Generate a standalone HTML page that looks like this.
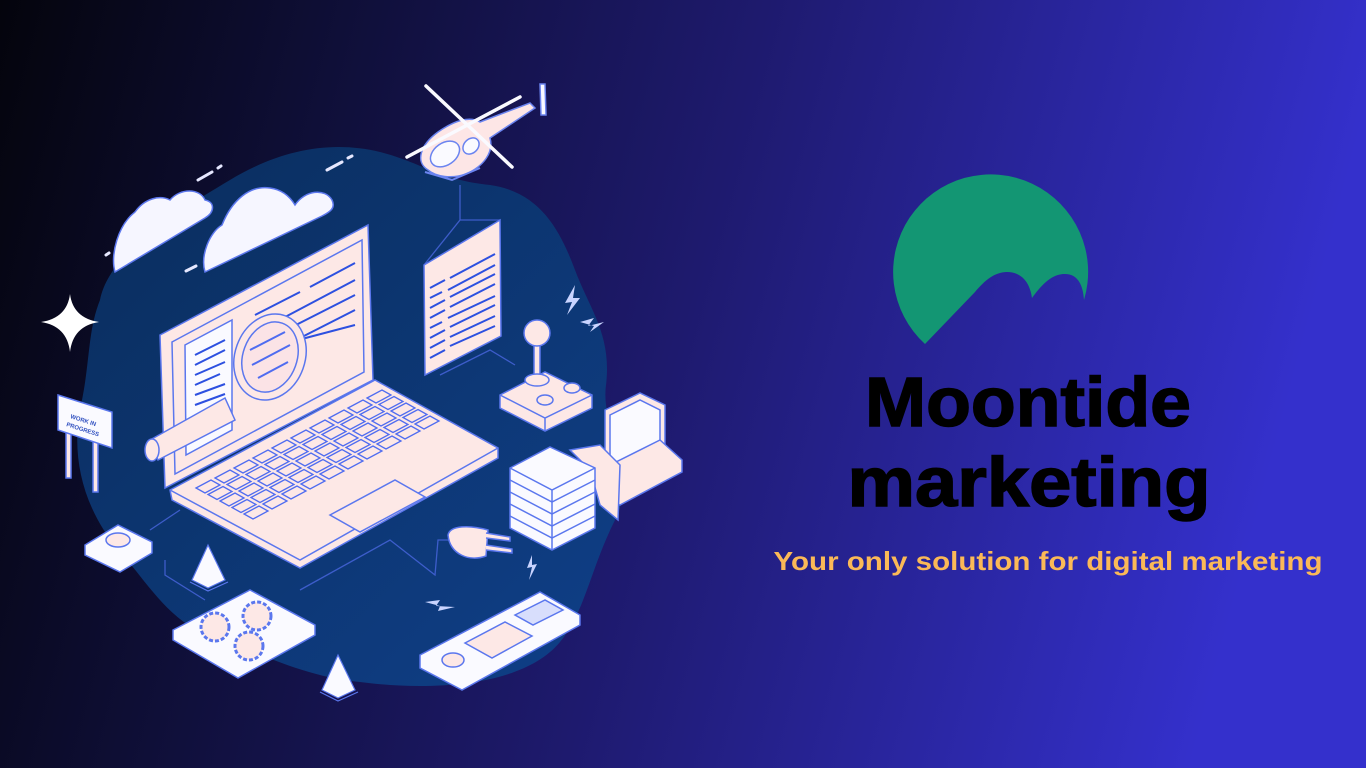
<!DOCTYPE html>
<html><head><meta charset="utf-8"><style>
html,body{margin:0;padding:0;width:1366px;height:768px;overflow:hidden}
svg{display:block}
</style></head><body>
<svg width="1366" height="768" viewBox="0 0 1366 768" xmlns="http://www.w3.org/2000/svg" xmlns:xlink="http://www.w3.org/1999/xlink">
<defs>
<linearGradient id="bg" x1="0" y1="0" x2="1" y2="0.15">
<stop offset="0" stop-color="#04040c"/><stop offset="0.25" stop-color="#0f0f38"/><stop offset="0.55" stop-color="#1e1a6e"/><stop offset="1" stop-color="#3430cc"/>
</linearGradient>
<linearGradient id="blob" x1="0" y1="0" x2="1" y2="1">
<stop offset="0" stop-color="#0a2d5c"/><stop offset="1" stop-color="#0f3f88"/>
</linearGradient>
<path id="key" d="M0,0 l15,-8 l9,5 l-15,8z" fill="#fde8e6" stroke="#4f6cf0" stroke-width="1.3"/>
<g id="row">
<use xlink:href="#key" x="0" y="0"/><use xlink:href="#key" x="19" y="-10"/><use xlink:href="#key" x="38" y="-20"/><use xlink:href="#key" x="57" y="-30"/><use xlink:href="#key" x="76" y="-40"/><use xlink:href="#key" x="95" y="-50"/><use xlink:href="#key" x="114" y="-60"/><use xlink:href="#key" x="133" y="-70"/><use xlink:href="#key" x="152" y="-80"/><use xlink:href="#key" x="171" y="-90"/>
</g>
</defs>
<rect width="1366" height="768" fill="url(#bg)"/>
<path d="M100,300 C110,250 180,210 230,180 C280,150 330,140 380,152 C420,162 440,180 490,185 C540,192 560,230 575,270 C590,310 612,335 606,385 C600,430 640,470 615,520 C590,570 585,612 560,642 C520,690 420,690 360,682 C300,676 260,652 220,640 C170,625 150,585 120,552 C80,505 70,450 82,400 C90,360 88,330 100,300Z" fill="url(#blob)"/>
<g stroke="#4a66e0" stroke-width="1.3" fill="none" opacity="0.8">
<path d="M150,530 L180,510"/><path d="M165,560 L165,575 L205,600 M300,590 L390,540 L435,575 L438,540 L450,540"/>
<path d="M440,375 L490,350 L515,365"/><path d="M460,185 L460,220 L424,265 M460,220 L500,220"/>
</g>
<path d="M70,294 Q73,318 99,322 Q73,326 70,352 Q67,326 41,322 Q67,318 70,294Z" fill="#fff"/>
<g stroke="#e6e8ff" stroke-width="3" stroke-linecap="round">
<path d="M198,180 L212,172 M218,168 L221,166 M327,170 L342,162 M348,158 L352,156 M186,271 L196,266 M143,250 L150,246 M106,255 L109,253"/>
</g>
<g fill="#f6f6ff" stroke="#5d78ee" stroke-width="1.5">
<path d="M115,272 C110,255 118,225 135,212 C145,198 160,195 170,200 C180,188 200,188 205,200 C215,202 215,212 205,218 L115,272Z"/>
<path d="M205,272 C200,255 210,232 222,225 C232,200 250,185 270,188 C285,190 292,200 295,205 C305,190 325,188 332,200 C336,208 330,212 322,216 L205,272Z"/>
</g>
<g stroke="#6b84f0" stroke-width="1.5">
<path d="M428,170 C415,162 420,145 438,132 C455,120 470,116 480,122 L530,103 L535,108 L490,138 C494,152 484,166 466,174 C452,179 436,177 428,170Z" fill="#fde6e6"/>
<ellipse cx="445" cy="154" rx="16" ry="11" fill="#fafaff" transform="rotate(-35 445 154)"/>
<ellipse cx="471" cy="146" rx="9" ry="7" fill="#fafaff" transform="rotate(-45 471 146)"/>
<path d="M540,84 L545,84 L546,115 L541,115Z" fill="#fafaff"/>
</g>
<g stroke="#fafaff" stroke-width="3.5" stroke-linecap="round">
<path d="M426,86 L512,167 M407,157 L520,97"/>
</g>
<path d="M425,172 L452,180 L480,168" stroke="#6b84f0" stroke-width="2" fill="none"/>
<path d="M424,265 L500,220 L501,336 L425,375Z" fill="#fde8e6" stroke="#5b77ee" stroke-width="1.5"/>
<g stroke="#2d50e0" stroke-width="2">
<path d="M430,288 L445,280 M450,278 L495,254 M430,298 L442,292 M448,290 L495,265 M430,308 L445,300 M450,297 L495,274 M430,318 L445,310 M450,307 L495,284 M430,328 L442,322 M448,318 L495,296 M430,338 L445,330 M450,327 L495,305 M430,348 L445,340 M450,337 L495,316 M430,358 L445,350 M450,346 L495,326"/>
</g>
<g stroke="#5b77ee" stroke-width="1.5">
<path d="M500,395 L545,372 L592,395 L592,408 L545,431 L500,408Z" fill="#fde8e6"/>
<path d="M500,395 L545,418 L592,395 M545,418 L545,431" fill="none"/>
<rect x="534" y="345" width="6" height="35" fill="#fde8e6"/>
<circle cx="537" cy="333" r="13" fill="#fde8e6"/>
<ellipse cx="537" cy="380" rx="12" ry="6" fill="#fde8e6"/>
<ellipse cx="572" cy="388" rx="8" ry="5" fill="#fde8e6"/>
<ellipse cx="545" cy="400" rx="8" ry="5" fill="#fde8e6"/>
</g>
<g fill="#c9d4ff"><path d="M575,285 L565,303 L572,302 L567,315 L580,298 L573,298Z"/><path d="M580,322 L594,318 L588,326 L604,322 L590,332 L594,326Z"/>
<path d="M532,555 L527,568 L532,567 L529,580 L537,564 L532,565Z"/><path d="M425,602 L440,600 L436,606 L455,607 L438,611 L440,606Z"/></g>
<g stroke="#5b77ee" stroke-width="1.5" fill="#fde8e6">
<path d="M605,410 L640,393 L665,405 L665,460 L630,478 L605,465Z"/>
<path d="M610,415 L640,400 L660,410 L660,455 L632,470 L610,460Z" fill="#fafaff"/>
<path d="M600,470 L660,440 L682,460 L682,472 L620,505 L598,495Z"/>
<path d="M570,450 L600,445 L620,465 L618,520 L600,505 L590,470Z"/>
</g>
<g stroke="#5b77ee" stroke-width="1.5">
<path d="M510,468 L550,447 L595,468 L595,528 L552,550 L510,528Z" fill="#fafaff"/>
<path d="M510,468 L552,490 L595,468 M552,490 L552,550" fill="none"/>
<path d="M510,480 L552,502 L595,480 M510,492 L552,514 L595,492 M510,504 L552,526 L595,504 M510,516 L552,538 L595,516" fill="none"/>
</g>
<g stroke="#5b77ee" stroke-width="1.5" fill="#fde8e6">
<path d="M448,535 C450,525 470,525 488,530 L486,556 C470,562 450,555 448,535Z"/>
<path d="M486,533 L510,537 L510,541 L486,538 M486,545 L512,549 L512,553 L486,550"/>
</g>
<g stroke="#5b77ee" stroke-width="1.5">
<path d="M170,490 L375,380 L498,448 L498,458 L300,568 L172,500Z" fill="#fde8e6"/>
<path d="M170,490 L300,560 L498,448" fill="none"/>
<path d="M330,515 L395,480 L425,497 L360,532Z" fill="#fde8e6"/>
</g>
<use xlink:href="#row" x="196" y="488"/>
<use xlink:href="#row" x="208" y="494.5"/>
<use xlink:href="#row" x="220" y="501"/>
<use xlink:href="#row" x="232" y="507.5"/>
<use xlink:href="#row" x="244" y="514"/>
<g stroke="#5b77ee" stroke-width="1.5">
<path d="M160,335 L368,225 L373,380 L165,488Z" fill="#fde8e6"/>
<path d="M172,342 L362,240 L364,372 L175,474Z" fill="#fde8e6"/>
<path d="M185,345 L232,320 L232,430 L186,455Z" fill="#fafaff"/>
</g>
<g stroke="#2d50e0" stroke-width="2">
<path d="M255,315 L300,292 M310,287 L355,263 M270,325 L355,280 M290,328 L355,295 M300,338 L355,310 M260,350 L355,325 M195,355 L225,340 M195,365 L225,350 M195,375 L225,362 M195,385 L220,374 M195,395 L225,384 M195,405 L225,394"/>
</g>
<g stroke="#5b77ee" stroke-width="1.5">
<path d="M150,440 L225,398 L235,420 L158,460Z" fill="#fde8e6"/>
<ellipse cx="152" cy="450" rx="7" ry="11" fill="#fde8e6"/>
<ellipse cx="270" cy="357" rx="35" ry="44" fill="#fde8e6" transform="rotate(20 270 357)"/>
<ellipse cx="270" cy="357" rx="27" ry="36" fill="#fbe3e6" transform="rotate(20 270 357)"/>
</g>
<g stroke="#4f6cf0" stroke-width="2"><path d="M250,350 L285,332 M252,365 L290,345 M258,378 L288,362"/></g>
<g stroke="#5b77ee" stroke-width="1.5" fill="#fde8e6">
<rect x="66" y="420" width="5" height="58"/><rect x="93" y="430" width="5" height="62"/>
<path d="M58,395 L112,412 L112,448 L58,430Z" fill="#fafaff"/>
</g>
<text x="70" y="418" font-family="Liberation Sans, sans-serif" font-size="6" font-weight="bold" fill="#3050c0" transform="rotate(18 70 418)">WORK IN</text>
<text x="66" y="426" font-family="Liberation Sans, sans-serif" font-size="6" font-weight="bold" fill="#3050c0" transform="rotate(18 66 426)">PROGRESS</text>
<g stroke="#5b77ee" stroke-width="1.5" fill="#fafaff">
<path d="M85,545 L118,525 L152,542 L152,553 L120,572 L85,555Z"/>
<ellipse cx="118" cy="540" rx="12" ry="7" fill="#fde8e6"/>
</g>
<g stroke="#5b77ee" stroke-width="1.2" fill="#fafaff">
<path d="M192,580 L208,545 L225,580 L208,588Z"/><path d="M190,582 L208,591 L228,582" fill="none"/>
<path d="M322,690 L338,655 L355,690 L338,698Z"/><path d="M320,692 L338,701 L358,692" fill="none"/>
</g>
<g stroke="#5b77ee" stroke-width="1.5">
<path d="M173,630 L250,590 L315,625 L315,635 L238,678 L173,640Z" fill="#fafaff"/>
<circle cx="215" cy="627" r="14" fill="#fde8e6" stroke-dasharray="4 2" stroke-width="3"/>
<circle cx="257" cy="616" r="14" fill="#fde8e6" stroke-dasharray="4 2" stroke-width="3"/>
<circle cx="249" cy="646" r="14" fill="#fde8e6" stroke-dasharray="4 2" stroke-width="3"/>
</g>
<g stroke="#5b77ee" stroke-width="1.5">
<path d="M420,655 L540,592 L580,615 L580,625 L462,690 L420,668Z" fill="#fafaff"/>
<path d="M465,643 L505,622 L532,636 L492,658Z" fill="#fde8e6"/>
<path d="M515,615 L545,600 L563,610 L533,625Z" fill="#d8defc"/>
<ellipse cx="453" cy="660" rx="11" ry="7" fill="#fde8e6"/>
</g>
<path d="M925,344 A97.5,97.5 0 1 1 1084,300 C1083,285 1078,273 1063,274 C1050,275 1040,287 1032,298 C1030,283 1022,272 1007,272 C995,272 985,280 975,292 Z" fill="#139673"/>
<text x="1028" y="426" text-anchor="middle" font-family="Liberation Sans, sans-serif" font-weight="bold" font-size="70" fill="#000" stroke="#000" stroke-width="1.5" textLength="326" lengthAdjust="spacingAndGlyphs">Moontide</text>
<text x="1029" y="506" text-anchor="middle" font-family="Liberation Sans, sans-serif" font-weight="bold" font-size="70" fill="#000" stroke="#000" stroke-width="1.5" textLength="363" lengthAdjust="spacingAndGlyphs">marketing</text>
<text x="1048" y="570" text-anchor="middle" font-family="Liberation Sans, sans-serif" font-weight="bold" font-size="26" fill="#fbb957" textLength="549" lengthAdjust="spacingAndGlyphs">Your only solution for digital marketing</text>
</svg>
</body></html>
